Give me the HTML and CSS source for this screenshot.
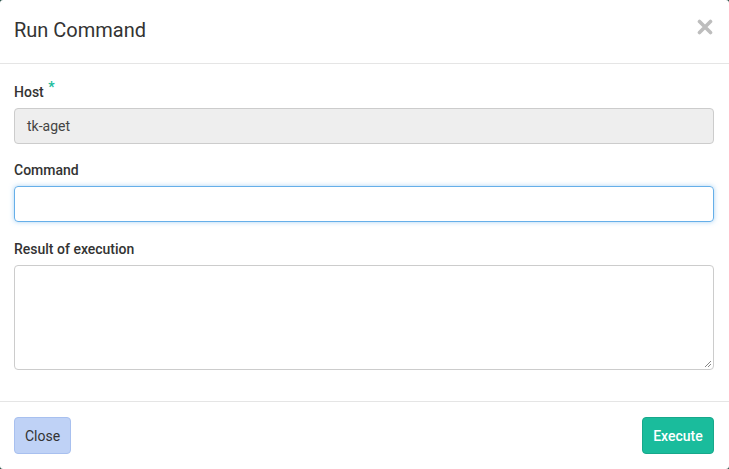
FILE: index.html
```html
<!DOCTYPE html>
<html>
<head>
<meta charset="utf-8">
<link rel="stylesheet" href="styles.css">
</head>
<body>
<div class="modal">
  <div class="modal-header">
    <h4 class="modal-title">Run Command</h4>
    <svg class="close" width="16" height="16" viewBox="0 0 16 16"><path d="M2.5 2.5 L13.5 13.5 M13.5 2.5 L2.5 13.5" stroke="#bdbdbd" stroke-width="3.6" stroke-linecap="round"/></svg>
  </div>
  <div class="modal-body">
    <div class="group">
      <label class="label">Host <span class="req">*</span></label>
      <div class="input readonly">tk-aget</div>
    </div>
    <div class="group">
      <label class="label">Command</label>
      <div class="input focus"></div>
    </div>
    <div class="group">
      <label class="label">Result of execution</label>
      <div class="textarea">
        <svg class="grip" width="8" height="8" viewBox="0 0 8 8"><path d="M7 1 L1 7 M7 4 L4 7" stroke="#888" stroke-width="1" fill="none"/></svg>
      </div>
    </div>
  </div>
  <div class="modal-footer">
    <button class="btn btn-close">Close</button>
    <button class="btn btn-exec">Execute</button>
  </div>
</div>
</body>
</html>
```
FILE: styles.css
```css
html, body {
  margin: 0;
  padding: 0;
  background: #1f4a40;
}
body {
  font-family: Roboto, "Liberation Sans", sans-serif;
  color: #333;
}
.modal {
  width: 729px;
  height: 469px;
  background: #fff;
  border-radius: 3px;
  box-sizing: border-box;
  display: flex;
  flex-direction: column;
}
.modal-header {
  flex: 0 0 auto;
  height: 63px;
  border-bottom: 1px solid #e5e5e5;
  display: flex;
  align-items: center;
  justify-content: space-between;
  padding: 0 16px 0 14px;
}
.modal-title {
  margin: 0;
  font-size: 20px;
  font-weight: normal;
  color: #333;
  padding-bottom: 3px;
}
.close {
  margin-top: -10px;
}
.modal-body {
  flex: 1 0 auto;
  padding: 13px 15px 13px 14px;
}
.group {
  margin-bottom: 17px;
}
.group:nth-child(1) {
  margin-bottom: 16px;
}
.label {
  display: block;
  font-size: 14px;
  font-weight: 500;
  line-height: 20px;
  margin-bottom: 6px;
  color: #333;
}
.req {
  color: #1abc9c;
  font-size: 14px;
  font-weight: bold;
  vertical-align: 5px;
  margin-left: 1px;
}
.input {
  height: 36px;
  box-sizing: border-box;
  border: 1px solid #ccc;
  border-radius: 4px;
  padding: 0 12px;
  font-size: 14px;
  line-height: 34px;
  color: #444;
}
.readonly {
  background: #eee;
}
.focus {
  border-color: #66afe9;
  box-shadow: 0 0 5px rgba(102, 175, 233, 0.55);
}
.textarea {
  height: 105px;
  box-sizing: border-box;
  border: 1px solid #ccc;
  border-radius: 4px;
  position: relative;
}
.grip {
  position: absolute;
  right: 1px;
  bottom: 1px;
}
.modal-footer {
  flex: 0 0 auto;
  border-top: 1px solid #e5e5e5;
  padding: 15px 15px 15px 14px;
  display: flex;
  justify-content: space-between;
}
.btn {
  height: 37px;
  border-radius: 4px;
  font-family: inherit;
  font-size: 14px;
  padding: 0 10px;
  cursor: pointer;
}
.btn-close {
  background: #bfd2f6;
  border: 1px solid #a8c0ef;
  color: #333;
  width: 57px;
}
.btn-exec {
  background: #1abc9c;
  border: 1px solid #17a88b;
  color: #fff;
  font-weight: 500;
  width: 72px;
}
```
